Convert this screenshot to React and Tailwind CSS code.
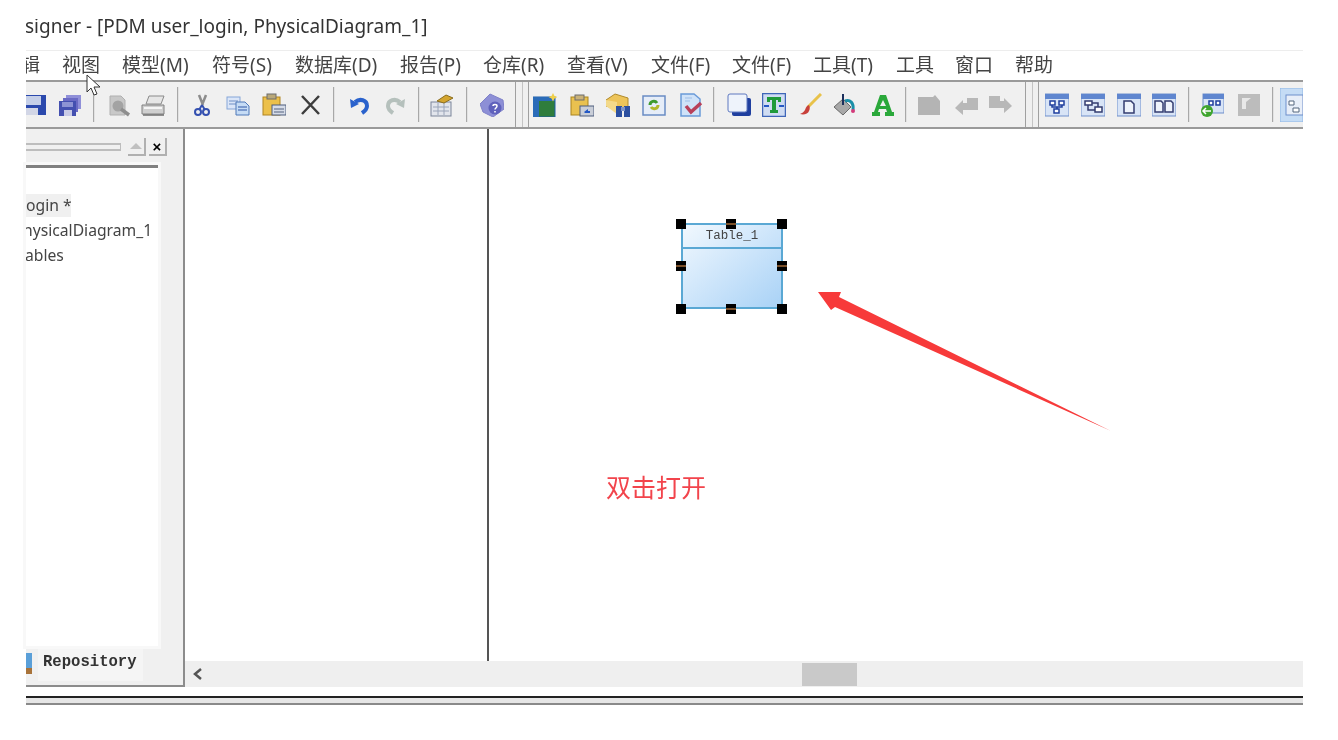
import React from 'react'

const cjk = "font-['Noto_Sans','Noto_Sans_CJK_SC',sans-serif]"

// widths are the pitch between the menu labels
const menuItems = [
  ['视图', 'w-[60px]'],
  ['模型(M)', 'w-[90px]'],
  ['符号(S)', 'w-[83px]'],
  ['数据库(D)', 'w-[105px]'],
  ['报告(P)', 'w-[83px]'],
  ['仓库(R)', 'w-[84px]'],
  ['查看(V)', 'w-[84px]'],
  ['文件(F)', 'w-[81px]'],
  ['文件(F)', 'w-[81px]'],
  ['工具(T)', 'w-[83px]'],
  ['工具', 'w-[59px]'],
  ['窗口', 'w-[60px]'],
  ['帮助', 'w-[60px]'],
]

const Svg = ({ children }) => (
  <svg viewBox="0 0 24 24" className="w-6 h-6 block">{children}</svg>
)

// toolbar icons, rough 24x24 redraws of the old PowerDesigner bitmaps
const SaveAll = () => (
  <Svg>
    <path d="M8 2h15v14h-3V5H8z" fill="#8f8fd8" />
    <path d="M5 5h15v14h-3V8H5z" fill="#6a6ac4" />
    <rect x="1" y="8" width="17" height="15" fill="#4450b0" />
    <rect x="6" y="17" width="8" height="6" fill="#c9cbe6" />
    <rect x="4" y="9" width="11" height="5" fill="#8d93d4" />
  </Svg>
)
const Preview = () => (
  <Svg>
    <path d="M3 3h11l4 4v15H3z" fill="#c8c8c8" stroke="#b0b0b0" />
    <circle cx="11" cy="13" r="5.500" fill="#a3a3a3" />
    <path d="M14 16l8 6" stroke="#8e8e8e" strokeWidth="3.500" />
  </Svg>
)
const Printer = () => (
  <Svg>
    <path d="M8 3h15l-3 8H5z" fill="#e6e6e6" stroke="#8a8a8a" />
    <path d="M1 12h22v9H1z" fill="#cfcfcf" stroke="#808080" />
    <path d="M3 15h18" stroke="#f5f5f5" strokeWidth="2" />
    <path d="M2 22h21" stroke="#6f6f6f" strokeWidth="1.500" />
  </Svg>
)
const Cut = () => (
  <Svg>
    <path d="M9 2l4 10M16 2l-4 10" stroke="#8c8c8c" strokeWidth="2.500" />
    <path d="M12 12l-3 5M12 12l3 5" stroke="#3450b0" strokeWidth="2" />
    <circle cx="8" cy="19" r="3" fill="none" stroke="#3450b0" strokeWidth="2" />
    <circle cx="16" cy="19" r="3" fill="none" stroke="#3450b0" strokeWidth="2" />
  </Svg>
)
const Copy = () => (
  <Svg>
    <rect x="1" y="4" width="13" height="12" fill="#dbe6f8" stroke="#86a6d8" />
    <path d="M3 8h9M3 11h9" stroke="#6f8fc5" />
    <path d="M10 9h9l4 4v9H10z" fill="#c6dcf5" stroke="#4f78b8" />
    <path d="M12 14h9M12 17h9" stroke="#2f57a5" />
  </Svg>
)
const Paste = () => (
  <Svg>
    <rect x="1" y="4" width="17" height="18" fill="#ecc04a" stroke="#b08420" />
    <rect x="5" y="1" width="9" height="5" fill="#b9a878" stroke="#6c6c6c" />
    <rect x="10" y="12" width="14" height="10" fill="#d6dce8" stroke="#4d5c7c" />
    <path d="M12 16h10M12 19h10" stroke="#55627e" />
  </Svg>
)
const Delete = () => (
  <Svg>
    <path d="M4 3l17 18M21 3L4 21" stroke="#3d3d3d" strokeWidth="2.500" />
  </Svg>
)
const Undo = () => (
  <Svg>
    <path d="M7 9c5-4 12-2 12 4 0 3-2 5-5 7" fill="none" stroke="#2a62cc" strokeWidth="4" />
    <path d="M2 6l1 9 8-4z" fill="#2a62cc" />
  </Svg>
)
const Redo = () => (
  <Svg>
    <path d="M17 9c-5-4-12-2-12 4 0 3 2 5 5 7" fill="none" stroke="#b5c0bc" strokeWidth="4" />
    <path d="M22 6l-1 9-8-4z" fill="#b5c0bc" />
  </Svg>
)
const Props = () => (
  <Svg>
    <rect x="1" y="9" width="20" height="14" fill="#e2e5ec" stroke="#7a8499" />
    <path d="M3 14h16M3 18h16M8 10v12M14 10v12" stroke="#9aa4b8" />
    <path d="M7 8l9-6 7 3-9 5z" fill="#d4a52e" stroke="#8a6d1e" />
  </Svg>
)
const Help = () => (
  <Svg>
    <path d="M0 11L10 1l13 6 1 9-11 8-10-5z" fill="#8d8fd6" stroke="#7f81c8" />
    <circle cx="15" cy="15" r="6.500" fill="#5f61bc" />
    <path d="M13 13c0-2 4-2 4 0 0 2-2 2-2 3.500M15 18v1.500" fill="none" stroke="#fff" strokeWidth="1.500" />
  </Svg>
)
const NewModel = () => (
  <Svg>
    <rect x="0" y="4" width="22" height="20" fill="#2f7d3c" stroke="#1f5ea8" />
    <rect x="0" y="4" width="22" height="4" fill="#2a6bb8" />
    <rect x="0" y="8" width="6" height="16" fill="#2a6bb8" />
    <path d="M20 0l1.500 3 3 1-3 1.500-1.500 3-1.500-3-3-1.500 3-1z" fill="#f0d04a" />
  </Svg>
)
const OpenModel = () => (
  <Svg>
    <rect x="1" y="4" width="17" height="18" fill="#e9c14f" stroke="#a9841f" />
    <rect x="5" y="2" width="9" height="5" fill="#c9b27a" stroke="#6c6c6c" />
    <rect x="10" y="13" width="14" height="10" fill="#c9ced8" stroke="#4d5c7c" />
    <path d="M14 19l4-3v2h2v2h-5z" fill="#2458c4" />
  </Svg>
)
const Binoculars = () => (
  <Svg>
    <path d="M0 7l9-6 13 4v11H10L0 13z" fill="#edc45a" stroke="#b08a2a" />
    <path d="M0 7l11 2v12L0 13z" fill="#f3d98a" />
    <rect x="10" y="13" width="6" height="11" fill="#2b4fa0" />
    <rect x="18" y="13" width="6" height="11" fill="#2b4fa0" />
    <rect x="15" y="14" width="4" height="4" fill="#7d93c8" />
  </Svg>
)
const Refresh = () => (
  <Svg>
    <rect x="1" y="3" width="22" height="19" fill="#e6edf8" stroke="#6a8cc4" strokeWidth="1.500" />
    <path d="M8 12c0-4 5-5 7-2" fill="none" stroke="#3f9a2e" strokeWidth="3" />
    <path d="M16 12c0 4-5 5-7 2" fill="none" stroke="#b2b82a" strokeWidth="3" />
  </Svg>
)
const Check = () => (
  <Svg>
    <path d="M2 1h13l6 5v17H2z" fill="#cfe2f8" stroke="#6a9ad8" strokeWidth="1.500" />
    <path d="M7 13l5 6 10-9" fill="none" stroke="#b8405a" strokeWidth="3.500" />
    <path d="M6 5h7M6 8h5" stroke="#9dbde6" />
  </Svg>
)
const Shadow = () => (
  <Svg>
    <rect x="5" y="5" width="19" height="18" rx="2" fill="#1f3f9f" />
    <rect x="1" y="1" width="19" height="18" rx="2" fill="#eef3fb" stroke="#5e78c0" />
  </Svg>
)
const TextBox = () => (
  <Svg>
    <rect x="0" y="0" width="24" height="24" fill="#cfdcf2" stroke="#3f66b8" strokeWidth="2.500" />
    <path d="M5 4h14v5h-3V7h-2v10h2v3H8v-3h2V7H8v2H5z" fill="#1f9a3a" />
    <path d="M2 13h5M17 13h5" stroke="#2458c4" strokeWidth="2" />
  </Svg>
)
const Brush = () => (
  <Svg>
    <path d="M23 1L10 14" stroke="#e8c24a" strokeWidth="3" />
    <path d="M11 12c-3 1-3 3-4 5-1 2-3 3-5 4 4 1 8 0 9-3 1-2 1-4 0-6z" fill="#c8403a" />
  </Svg>
)
const PaintBucket = () => (
  <Svg>
    <path d="M1 14l9-8 8 8-8 8z" fill="#a8a8a8" stroke="#6a6a6a" />
    <path d="M10 1v11" stroke="#1b2f5c" strokeWidth="2" />
    <path d="M12 8c5-2 9 2 8 9" fill="none" stroke="#1b8fa8" strokeWidth="3" />
    <circle cx="20" cy="18" r="2" fill="#d33a7a" />
  </Svg>
)
const FontA = () => (
  <Svg>
    <path d="M9 2h6l6 17h2v4h-9v-4h2l-1-3H8l-1 3h2v4H1v-4h2zM12 7l-3 6h6z" fill="#2aa83a" fillRule="evenodd" />
  </Svg>
)
const GrayTag = () => (
  <Svg>
    <path d="M1 4h15l2-2 5 6v14H1z" fill="#b4b4b4" />
  </Svg>
)
const GrayLeft = () => (
  <Svg>
    <path d="M1 15l8-8v3h4V5h11v12H9v5z" fill="#b8b8b8" />
  </Svg>
)
const GrayRight = () => (
  <Svg>
    <path d="M23 13l-8-8v3h-4V3H0v12h15v5z" fill="#b8b8b8" />
  </Svg>
)
const Frame = ({ children }) => (
  <Svg>
    <rect x="0" y="1" width="24" height="22" fill="#d8e4f6" stroke="#6f8fcb" />
    <rect x="0" y="1" width="24" height="5" fill="#5f86cf" />
    {children}
  </Svg>
)
const Tree = () => (
  <Frame>
    <rect x="5" y="8" width="5" height="4" fill="#fff" stroke="#1f3f9f" strokeWidth="1.500" />
    <rect x="14" y="8" width="5" height="4" fill="#fff" stroke="#1f3f9f" strokeWidth="1.500" />
    <rect x="9" y="16" width="5" height="4" fill="#fff" stroke="#1f3f9f" strokeWidth="1.500" />
    <path d="M7 12v2h10v-2M12 14v2" fill="none" stroke="#1f3f9f" strokeWidth="1.500" />
  </Frame>
)
const Links = () => (
  <Frame>
    <rect x="4" y="8" width="7" height="4" fill="#fff" stroke="#333d70" strokeWidth="1.500" />
    <rect x="14" y="14" width="7" height="5" fill="#fff" stroke="#333d70" strokeWidth="1.500" />
    <path d="M7 12v5h7M11 10h6v4" fill="none" stroke="#333d70" strokeWidth="1.500" />
  </Frame>
)
const Page = () => (
  <Frame>
    <path d="M7 8h7l3 3v9H7z" fill="#eef3fb" stroke="#333d70" strokeWidth="1.500" />
  </Frame>
)
const Pages = () => (
  <Frame>
    <path d="M3 8h6l2 2v9H3zM13 8h6l2 2v9h-8z" fill="#eef3fb" stroke="#333d70" strokeWidth="1.500" />
  </Frame>
)
const GreenArrow = () => (
  <Svg>
    <rect x="3" y="1" width="21" height="19" fill="#d8e4f6" stroke="#6f8fcb" />
    <rect x="3" y="1" width="21" height="5" fill="#5f86cf" />
    <path d="M9 8h4v4H9zM16 8h4v4h-4z" fill="#fff" stroke="#1f3f9f" strokeWidth="1.500" />
    <circle cx="7" cy="18" r="6" fill="#3fa52e" />
    <path d="M3 18h8M6 15l-3 3 3 3" fill="none" stroke="#fff" strokeWidth="1.500" />
  </Svg>
)
const GrayFrame = () => (
  <Svg>
    <rect x="1" y="1" width="22" height="22" fill="#bcbcbc" />
    <path d="M5 5h9l-5 4v7H5z" fill="#e8e8e8" />
  </Svg>
)
const Selected = () => (
  <svg viewBox="0 0 23 34" className="w-[23px] h-[34px] block">
    <rect x="0" y="0" width="23" height="34" fill="#c5dcf5" stroke="#8fb6e4" />
    <rect x="6" y="7" width="17" height="20" fill="#e8eef8" stroke="#6f8fcb" />
    <path d="M9 13h5v4H9zM13 20h6v4h-6z" fill="#fff" stroke="#55667f" />
  </svg>
)

const Sep = ({ className }) => (
  <div className={`${className} w-[2px] h-[35px] bg-[#a8a8a8] border-r border-[#e2e2e2]`} />
)
const Grip = ({ className }) => (
  <div className={`${className} w-[14px] h-[46px] flex justify-between`}>
    <div className="w-px bg-[#a0a0a0]" />
    <div className="w-px bg-[#c4c4c4]" />
    <div className="w-px bg-[#a0a0a0]" />
  </div>
)

const tools = [
  [SaveAll, 'ml-[12px]'], ['sep', 'ml-[11px]'], [Preview, 'ml-[12px]'], [Printer, 'ml-[10px]'], ['sep', 'ml-[12px]'],
  [Cut, 'ml-[11px]'], [Copy, 'ml-[12px]'], [Paste, 'ml-[12px]'], [Delete, 'ml-[12px]'], ['sep', 'ml-[11px]'],
  [Undo, 'ml-[13px]'], [Redo, 'ml-[11px]'], ['sep', 'ml-[11px]'], [Props, 'ml-[10px]'], ['sep', 'ml-[12px]'],
  [Help, 'ml-[12px]'], ['grip', 'ml-[11px]'], [NewModel, 'ml-[4px]'], [OpenModel, 'ml-[13px]'], [Binoculars, 'ml-[12px]'],
  [Refresh, 'ml-[12px]'], [Check, 'ml-[13px]'], ['sep', 'ml-[10px]'], [Shadow, 'ml-[12px]'], [TextBox, 'ml-[11px]'],
  [Brush, 'ml-[12px]'], [PaintBucket, 'ml-[11px]'], [FontA, 'ml-[14px]'], ['sep', 'ml-[10px]'], [GrayTag, 'ml-[10px]'],
  [GrayLeft, 'ml-[13px]'], [GrayRight, 'ml-[11px]'], ['grip', 'ml-[12px]'], [Tree, 'ml-[6px]'], [Links, 'ml-[12px]'],
  [Page, 'ml-[12px]'], [Pages, 'ml-[11px]'], ['sep', 'ml-[12px]'], [GreenArrow, 'ml-[10px]'], [GrayFrame, 'ml-[13px]'],
  ['sep', 'ml-[11px]'],
]

const Toolbar = () => (
  <div className="h-[49px] flex items-center bg-[#f0f0f0] border-t-2 border-b-2 border-[#9a9a9a] overflow-hidden">
    <div className="w-5 shrink-0 overflow-hidden">
      <svg viewBox="0 0 20 24" className="w-5 h-6 block">
        <rect x="-4" y="2" width="24" height="20" fill="#2b49ad" />
        <rect x="-4" y="3" width="19" height="9" fill="#c5cfe8" />
        <rect x="-2" y="15" width="14" height="7" fill="#d2d6e6" />
      </svg>
    </div>
    {tools.map(([Item, ml], i) => {
      if (Item === 'sep') return <Sep key={i} className={`${ml} shrink-0`} />
      if (Item === 'grip') return <Grip key={i} className={`${ml} shrink-0`} />
      return (
        <div key={i} className={`${ml} shrink-0`}>
          <Item />
        </div>
      )
    })}
    <div className="ml-[6px] shrink-0">
      <Selected />
    </div>
  </div>
)

const TreePanel = () => (
  <div className="w-[159px] shrink-0 bg-[#f0f0f0] border-r-2 border-b-2 border-[#8c8c8c] flex flex-col">
    <div className="h-[36px] flex items-center pr-[16px]">
      <div className="w-[95px] h-[8px] border-t-2 border-b-2 border-[#bdbdbd] border-r" />
      <div className="ml-[7px] w-[18px] h-[18px] border-r-2 border-b-2 border-[#b0b0b0] flex items-center justify-center">
        <div className="w-0 h-0 border-x-[6px] border-b-[6px] border-x-transparent border-b-[#c0c0c0]" />
      </div>
      <div className="ml-[3px] w-[18px] h-[18px] border-r-2 border-b-2 border-[#b0b0b0] flex items-center justify-center text-[15px] leading-none font-bold text-black font-['Liberation_Sans',sans-serif]">
        ×
      </div>
    </div>
    <div className="w-[132px] h-[481px] bg-white border-t-[3px] border-[#808080] overflow-hidden outline-[3px] outline-[#f8f8f8] text-[#444] text-[15.7px] font-['Noto_Sans',sans-serif]">
      <div className="mt-[26px] h-[23px] w-[45px] bg-[#f0f0f0] leading-[23px] whitespace-nowrap">ogin *</div>
      <div className="h-[25px] mt-[1px] leading-[25px] whitespace-nowrap -ml-[3px]">nysicalDiagram_1</div>
      <div className="h-[25px] leading-[25px] whitespace-nowrap -ml-[1px]">ables</div>
    </div>
    <div className="mt-[3px] h-[32px] flex items-start">
      <svg viewBox="0 0 6 24" className="w-[6px] h-6 block shrink-0 mt-[4px]">
        <rect x="0" y="0" width="6" height="15" fill="#5a9fd8" />
        <rect x="0" y="15" width="6" height="6" fill="#a8733a" />
      </svg>
      <div className="ml-[6px] w-[105px] h-[32px] pl-[5px] bg-[#f5f5f5] text-[15.6px] leading-[26px] font-bold text-[#333] font-['Liberation_Mono',monospace]">
        Repository
      </div>
    </div>
  </div>
)

const Handle = ({ className, mid }) => (
  <div className={`absolute w-[10px] h-[10px] bg-black flex items-center justify-center ${className}`}>
    {mid && <div className="w-full h-[2px] bg-[#7a4f28]" />}
  </div>
)

const TableNode = () => (
  <div className="absolute left-[496px] top-[94px] w-[102px] h-[86px]">
    <div className="w-full h-full border-2 border-[#5aa8d4] bg-gradient-to-br from-[#f1f8fe] to-[#a9d2f6] flex flex-col">
      <div className="h-[24px] border-b-2 border-[#5aa8d4] text-center text-[12.5px] leading-[22px] text-[#444] font-['Liberation_Mono',monospace]">
        Table_1
      </div>
    </div>
    <Handle className="-left-[5px] -top-[4px]" />
    <Handle mid className="left-[45px] -top-[4px]" />
    <Handle className="-right-[4px] -top-[4px]" />
    <Handle mid className="-left-[5px] top-[38px]" />
    <Handle mid className="-right-[4px] top-[38px]" />
    <Handle className="-left-[5px] -bottom-[5px]" />
    <Handle mid className="left-[45px] -bottom-[5px]" />
    <Handle className="-right-[4px] -bottom-[5px]" />
  </div>
)

const Canvas = () => (
  <div className="relative flex-1 flex bg-white">
    <div className="w-[302px] shrink-0 bg-white" />
    <div className="w-[2px] shrink-0 bg-[#555]" />
    <div className="flex-1" />
    <TableNode />
    {/* red annotation arrow */}
    <svg viewBox="0 0 300 150" className="absolute left-[632px] top-[162px] w-[300px] h-[150px]">
      <path d="M1 1L24 1 22 6 294 140 18 16 14 19z" fill="#f73a3a" />
    </svg>
    <div className={`absolute left-[421px] top-[340px] text-[25px] leading-[36px] text-[#f2444c] ${cjk}`}>
      双击打开
    </div>
  </div>
)

const Scrollbar = () => (
  <div className="h-[26px] bg-[#efefef] flex items-center">
    <svg viewBox="0 0 10 12" className="ml-[8px] w-[10px] h-[12px] block">
      <path d="M8 1L2 6l6 5" fill="none" stroke="#555" strokeWidth="2.500" />
    </svg>
    <div className="ml-[599px] w-[55px] h-[23px] bg-[#c9c9c9]" />
  </div>
)

export default function App() {
  return (
    <div className="relative w-[1338px] h-[740px] bg-white overflow-hidden pl-[26px] pr-[35px] text-[#333] blur-[0.4px]">
      {/* title, cut off on the left and at the top */}
      <div className="mt-[19px] h-[31px] overflow-hidden">
        <div className="-mt-[4px] -ml-[1px] text-[19px] leading-[22px] whitespace-nowrap text-[#333] font-['Noto_Sans',sans-serif]">
          signer - [PDM user_login, PhysicalDiagram_1]
        </div>
      </div>
      <div className={`h-[30px] pb-[1px] border-t border-[#ededed] flex items-center text-[19px] whitespace-nowrap text-[#444] ${cjk}`}>
        <div className="w-[14px] mr-[22px] overflow-hidden flex justify-end shrink-0">
          <span className="shrink-0">辑</span>
        </div>
        {menuItems.map(([label, w], i) => (
          <div key={i} className={`${w} shrink-0`}>{label}</div>
        ))}
      </div>
      <Toolbar />
      <div className="flex h-[558px]">
        <TreePanel />
        <div className="flex-1 flex flex-col min-w-0">
          <Canvas />
          <Scrollbar />
        </div>
      </div>
      <div className="mt-[9px] h-[2px] bg-[#222]" />
      <div className="h-[5px] bg-[#e6e6e6]" />
      <div className="h-[2px] bg-[#8a8a8a]" />
      {/* mouse cursor */}
      <svg viewBox="0 0 16 23" className="absolute left-[86px] top-[74px] w-[16px] h-[23px]">
        <path d="M1 1v17l4-4 3 7 3-1-3-7h6z" fill="#fff" stroke="#333" strokeWidth="1" />
      </svg>
    </div>
  )
}
